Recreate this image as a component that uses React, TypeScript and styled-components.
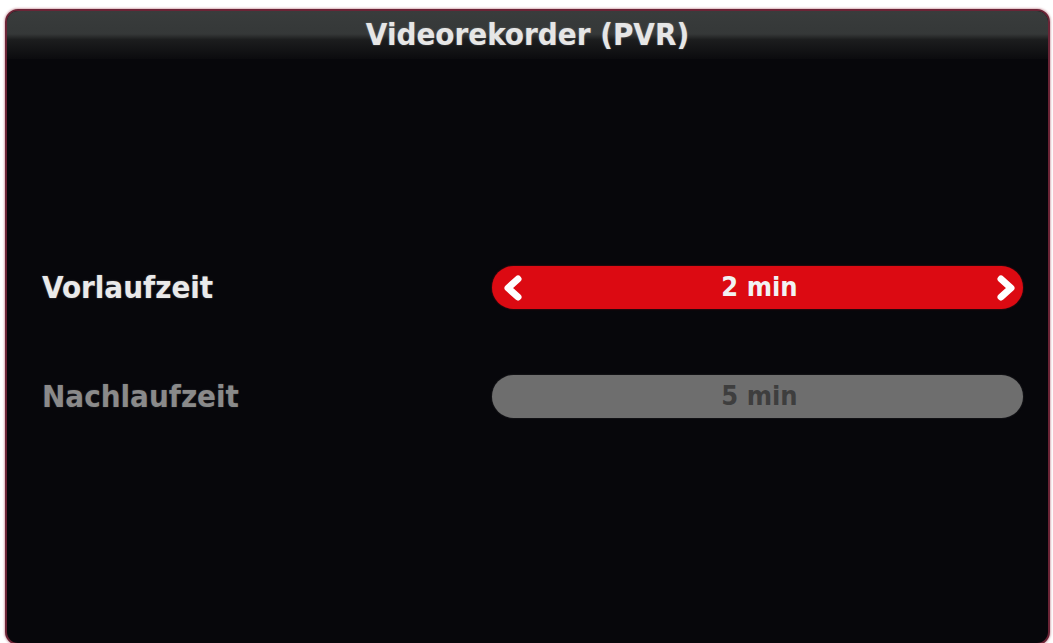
import styled, { createGlobalStyle } from 'styled-components';

const GlobalStyle = createGlobalStyle`
  html, body {
    margin: 0;
    padding: 0;
    background: #ffffff;
    overflow: hidden;
  }
`;

interface SettingRowData {
  label: string;
  value: string;
  active: boolean;
}

const rows: SettingRowData[] = [
  { label: 'Vorlaufzeit', value: '2 min', active: true },
  { label: 'Nachlaufzeit', value: '5 min', active: false },
];

const Chevron = ({ dir }: { dir: 'left' | 'right' }) => (
  <svg width="26" height="26" viewBox="0 0 26 26">
    <path
      d={dir === 'left' ? 'M18 4 L8 13 L18 22' : 'M8 4 L18 13 L8 22'}
      fill="none"
      stroke="#ffffff"
      strokeWidth="7"
      strokeLinecap="round"
      strokeLinejoin="round"
    />
  </svg>
);

const App = () => {
  return (
    <>
      <GlobalStyle />
      <Panel>
        <PanelHeader>Videorekorder (PVR)</PanelHeader>
        <SettingsList>
          {rows.map((row) => (
            <SettingRow key={row.label}>
              <SettingLabel $active={row.active}>{row.label}</SettingLabel>
              <ValuePill $active={row.active}>
                <ArrowSlot>{row.active && <Chevron dir="left" />}</ArrowSlot>
                <PillValue $active={row.active}>{row.value}</PillValue>
                <ArrowSlot>{row.active && <Chevron dir="right" />}</ArrowSlot>
              </ValuePill>
            </SettingRow>
          ))}
        </SettingsList>
      </Panel>
    </>
  );
};

export default App;

const Panel = styled.div`
  box-sizing: border-box;
  margin: 9px 3px 0 5px;
  height: 636px;
  border: 2px solid #6b2436;
  border-radius: 13px;
  background: #07070b;
  box-shadow: 0 0 2px 1px rgba(150, 40, 60, 0.35);
  overflow: hidden;
  font-family: 'DejaVu Sans Condensed', 'DejaVu Sans', sans-serif;
  font-weight: bold;
`;

const PanelHeader = styled.div`
  height: 48px;
  padding-top: 3px;
  box-sizing: border-box;
  text-align: center;
  color: #e6e6e6;
  font-size: 31px;
  line-height: 40px;
  background: linear-gradient(
    to bottom,
    #393c3c 0%,
    #353838 48%,
    #1c1d1e 60%,
    #0b0b0e 100%
  );
  text-shadow: 0 0 2px rgba(255, 255, 255, 0.3);
`;

const SettingsList = styled.div`
  display: flex;
  flex-direction: column;
  gap: 66px;
  padding: 207px 25px 0 35px;
`;

const SettingRow = styled.div`
  display: grid;
  grid-template-columns: 450px 1fr;
  align-items: center;
  height: 43px;
`;

const SettingLabel = styled.div<{ $active: boolean }>`
  font-size: 31px;
  color: ${({ $active }) => ($active ? '#eaeaea' : '#8a8a8a')};
  text-shadow: 0 0 2px ${({ $active }) => ($active ? 'rgba(255,255,255,0.3)' : 'rgba(140,140,140,0.3)')};
  padding-bottom: 2px;
`;

const ValuePill = styled.div<{ $active: boolean }>`
  display: flex;
  align-items: center;
  justify-content: space-between;
  height: 43px;
  padding: 0 4px 0 8px;
  border-radius: 22px;
  background: ${({ $active }) => ($active ? '#dc0a12' : '#6e6e6e')};
  box-shadow: 0 0 2px ${({ $active }) => ($active ? 'rgba(230,20,30,0.5)' : 'rgba(110,110,110,0.4)')};
`;

const ArrowSlot = styled.div`
  width: 26px;
  height: 26px;
  display: flex;
  align-items: center;
  justify-content: center;
`;

const PillValue = styled.div<{ $active: boolean }>`
  flex: 1;
  text-align: center;
  font-size: 27px;
  color: ${({ $active }) => ($active ? '#f2f2f2' : '#3e3e3e')};
  padding-bottom: 3px;
`;
